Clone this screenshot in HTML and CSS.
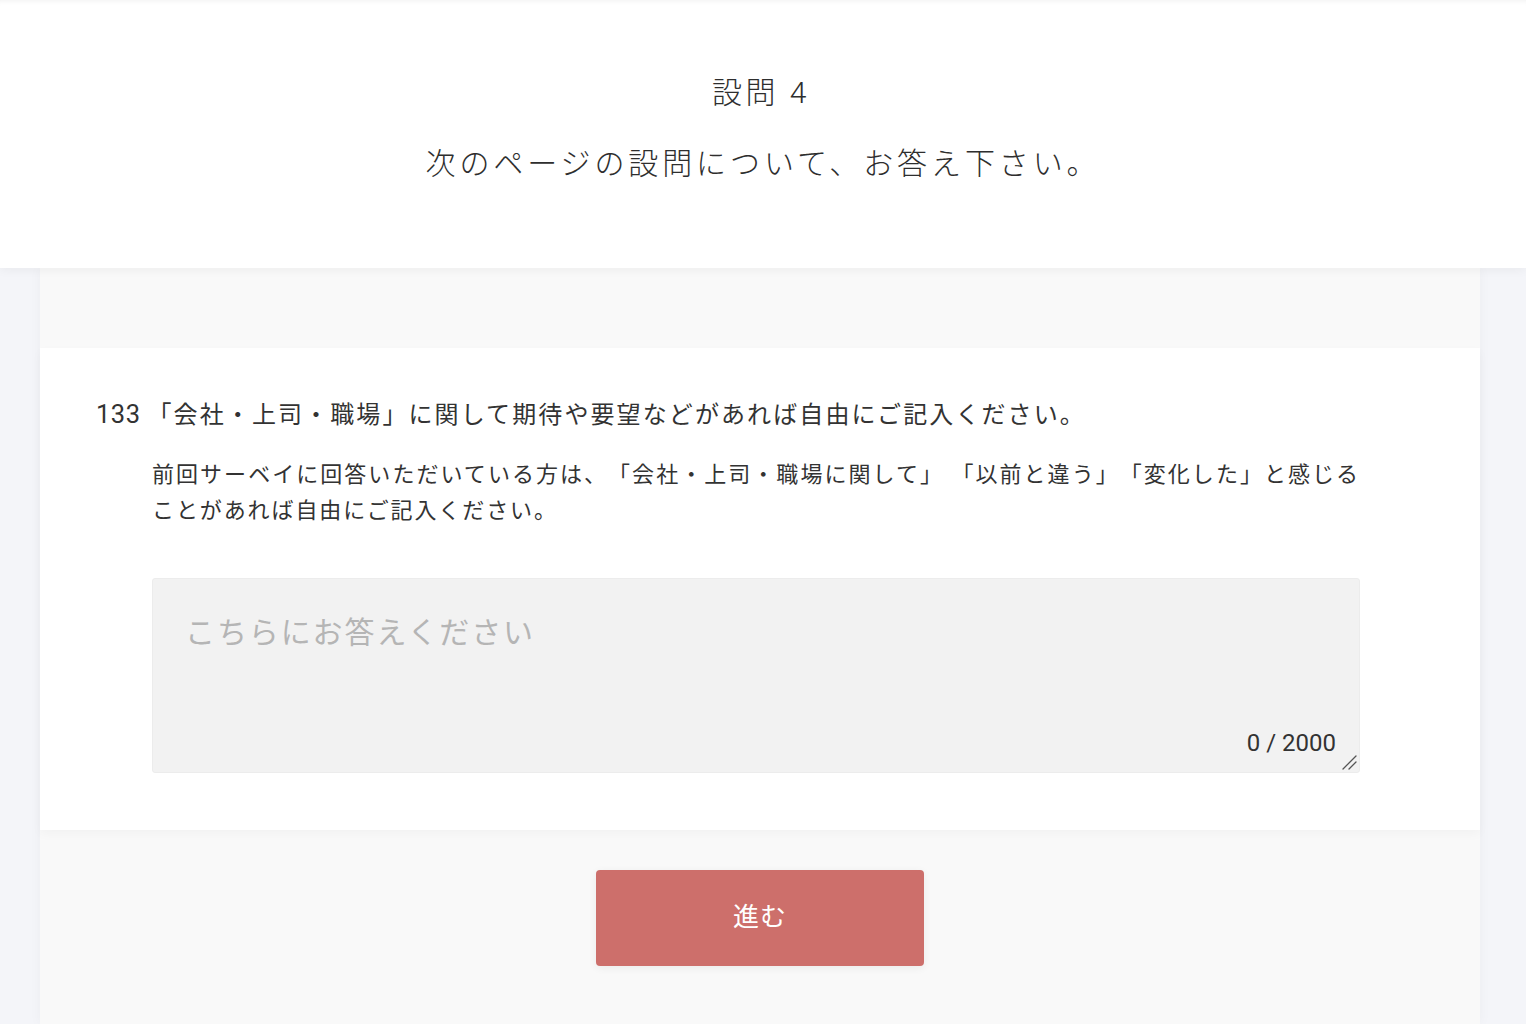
FILE: index.html
```html
<!DOCTYPE html>
<html lang="ja">
<head>
<meta charset="utf-8">
<title>設問 4</title>
<link rel="stylesheet" href="styles.css">
</head>
<body>
<header class="header">
  <h1 class="title">設問 4</h1>
  <p class="subtitle">次のページの設問について、お答え下さい。</p>
</header>
<main class="column">
  <div class="spacer"></div>
  <section class="card">
    <div class="question">
      <span class="qnum">133</span>
      <span class="qtext">「会社・上司・職場」に関して期待や要望などがあれば自由にご記入ください。</span>
    </div>
    <div class="answer">
      <p class="note">前回サーベイに回答いただいている方は、「会社・上司・職場に関して」 「以前と違う」「変化した」と感じることがあれば自由にご記入ください。</p>
      <div class="field">
        <textarea class="input" placeholder="こちらにお答えください"></textarea>
        <span class="counter">0 / 2000</span>
        <svg class="grip" width="16" height="16" viewBox="0 0 16 16" aria-hidden="true">
          <path d="M2 15 L15 2 M8 15 L15 8" stroke="#555" stroke-width="1.3" fill="none" stroke-linecap="round"/>
        </svg>
      </div>
    </div>
  </section>
  <div class="actions">
    <button class="next" type="button">進む</button>
  </div>
</main>
</body>
</html>
```

FILE: styles.css
```css
* { box-sizing: border-box; }
html, body { margin: 0; padding: 0; }
body {
  background: #f4f5f9;
  font-family: Roboto, "Noto Sans CJK JP", sans-serif;
  font-weight: 400;
  color: #333;
  height: 1024px;
  overflow: hidden;
  text-spacing-trim: space-all;
}
.header {
  position: relative;
  z-index: 2;
  background: #fff;
  height: 268px;
  padding-top: 71px;
  text-align: center;
  box-shadow: 0 2px 10px rgba(0,0,0,0.05), inset 0 6px 6px -6px rgba(0,0,0,0.08);
}
.title {
  margin: 0 4px 0 0;
  font-size: 30px;
  font-weight: 300;
  line-height: 44px;
  letter-spacing: 3.5px;
  color: #2e2e2e;
}
.subtitle {
  margin: 27px 0 0;
  font-size: 30px;
  font-weight: 300;
  line-height: 44px;
  letter-spacing: 3.9px;
  color: #2e2e2e;
}
.column {
  position: relative;
  z-index: 1;
  width: 1440px;
  margin: 0 0 0 40px;
  background: #f9f9f9;
  min-height: 756px;
  box-shadow: 0 0 12px rgba(0,0,0,0.04);
}
.spacer {
  height: 80px;
}
.card {
  background: #fff;
  padding: 48px 120px 57px 56px;
  box-shadow: 0 4px 10px rgba(0,0,0,0.03);
}
.question {
  display: flex;
  align-items: baseline;
  height: 36px;
  font-size: 24px;
  line-height: 36px;
  letter-spacing: 2.1px;
}
.qnum {
  font-size: 25.5px;
  letter-spacing: 0.5px;
  margin-right: 7px;
}
.answer {
  padding-left: 56px;
  margin-top: 25px;
}
.note {
  margin: 0;
  font-size: 22px;
  line-height: 36px;
  letter-spacing: 1.9px;
  text-align: justify;
}
.field {
  position: relative;
  margin-top: 49px;
}
.input {
  display: block;
  width: 100%;
  height: 195px;
  background: #f2f2f2;
  border: 1px solid #ececec;
  border-radius: 3px;
  padding: 32px 32px;
  font-family: Roboto, "Noto Sans CJK JP", sans-serif;
  font-weight: 400;
  font-size: 30px;
  line-height: 44px;
  letter-spacing: 1.9px;
  color: #333;
  outline: none;
  resize: none;
}
.input::placeholder {
  color: #b5b5b5;
}
.counter {
  position: absolute;
  right: 24px;
  bottom: 15px;
  font-size: 24px;
  line-height: 30px;
  color: #333;
  pointer-events: none;
}
.grip {
  position: absolute;
  right: 3px;
  bottom: 3px;
  pointer-events: none;
}
.actions {
  display: flex;
  justify-content: center;
  padding: 40px 0 58px;
}
.next {
  width: 328px;
  height: 96px;
  border: none;
  border-radius: 4px;
  background: #cd6f6b;
  color: #fff;
  font-family: Roboto, "Noto Sans CJK JP", sans-serif;
  font-weight: 400;
  font-size: 26px;
  letter-spacing: 1px;
  padding: 0 0 8px;
  box-shadow: 0 2px 8px rgba(0,0,0,0.06);
  cursor: pointer;
}
```
